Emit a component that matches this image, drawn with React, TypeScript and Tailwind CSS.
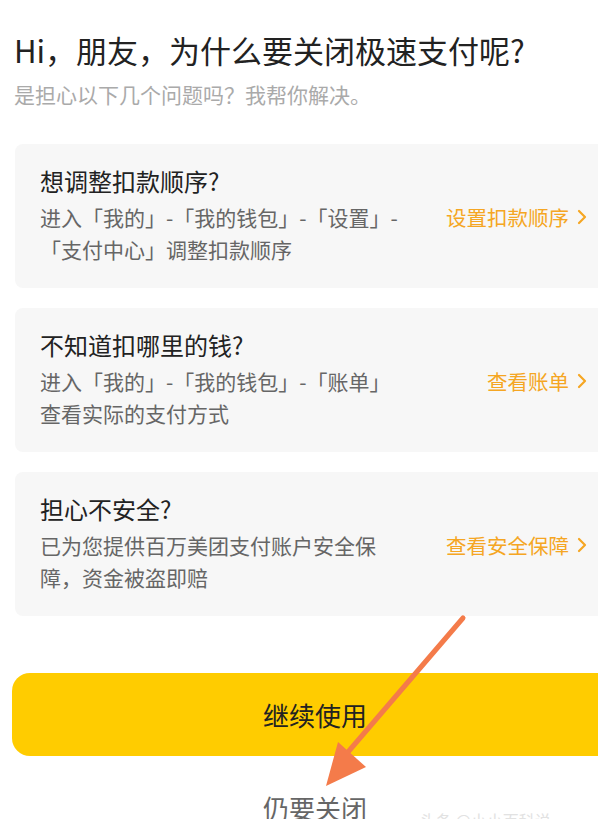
import React from "react";

const cards = [
  {
    title: "想调整扣款顺序?",
    lines: ["进入「我的」-「我的钱包」-「设置」-", "「支付中心」调整扣款顺序"],
    link: "设置扣款顺序",
  },
  {
    title: "不知道扣哪里的钱?",
    lines: ["进入「我的」-「我的钱包」-「账单」", "查看实际的支付方式"],
    link: "查看账单",
  },
  {
    title: "担心不安全?",
    lines: ["已为您提供百万美团支付账户安全保", "障，资金被盗即赔"],
    link: "查看安全保障",
  },
];

const Chevron = () => (
  <svg className="w-[12px] h-[18px] ml-[7px]" viewBox="0 0 12 18" fill="none" stroke="currentColor" strokeWidth={2.2}>
    <path strokeLinecap="round" strokeLinejoin="round" d="M3 3l6 6-6 6" />
  </svg>
);

export default function App() {
  return (
    <div
      className="relative w-full h-[819px] overflow-hidden bg-white"
      style={{ fontFamily: '"Noto Sans CJK SC", "Noto Sans", sans-serif' }}
    >
      {/* Header */}
      <div className="pl-[14px] pt-[30px]">
        <h1 className="text-[31px] leading-[40px] text-[#222] whitespace-nowrap">Hi，朋友，为什么要关闭极速支付呢?</h1>
        <p className="mt-[10px] text-[21px] leading-[28px] text-[#aaa] whitespace-nowrap">是担心以下几个问题吗？我帮你解决。</p>
      </div>

      {/* Cards */}
      <div className="mt-[36px] ml-[15px] flex flex-col gap-[20px]">
        {cards.map((c) => (
          <div key={c.title} className="w-[600px] h-[144px] rounded-l-[8px] bg-[#f7f7f7] pl-[25px] pr-[27px] pt-[21px]">
            <div className="text-[24px] leading-[32px] text-[#222] whitespace-nowrap">{c.title}</div>
            <div className="mt-[4px] flex items-start">
              <div className="flex-1 text-[21px] leading-[32px] text-[#666]">
                {c.lines.map((l) => (
                  <div key={l} className="whitespace-nowrap">{l}</div>
                ))}
              </div>
              <div className="flex items-center h-[32px] text-[20.5px] text-[#f5a623] whitespace-nowrap">
                {c.link}
                <Chevron />
              </div>
            </div>
          </div>
        ))}
      </div>

      {/* Actions */}
      <div className="mt-[57px] ml-[12px]">
        <button className="w-[606px] h-[83px] rounded-[18px] bg-[#ffcc00] flex items-center justify-center text-[26px] text-[#222]">
          继续使用
        </button>
        <div className="mt-[34px] w-[606px] text-center text-[26px] leading-[36px] text-[#666]">仍要关闭</div>
      </div>

      {/* Annotation arrow */}
      <svg className="absolute left-0 top-0 w-[598px] h-[819px] pointer-events-none" viewBox="0 0 598 819">
        <line x1="463" y1="618" x2="348" y2="752" stroke="#f47b4a" strokeWidth="5" strokeLinecap="round" />
        <polygon points="326,786 338,742 366,767" fill="#f47b4a" />
      </svg>

      {/* Watermark */}
      <div className="absolute left-[420px] top-[808px] text-[16px] text-[#e2e2e2] whitespace-nowrap">头条 @小小百科说</div>
    </div>
  );
}
